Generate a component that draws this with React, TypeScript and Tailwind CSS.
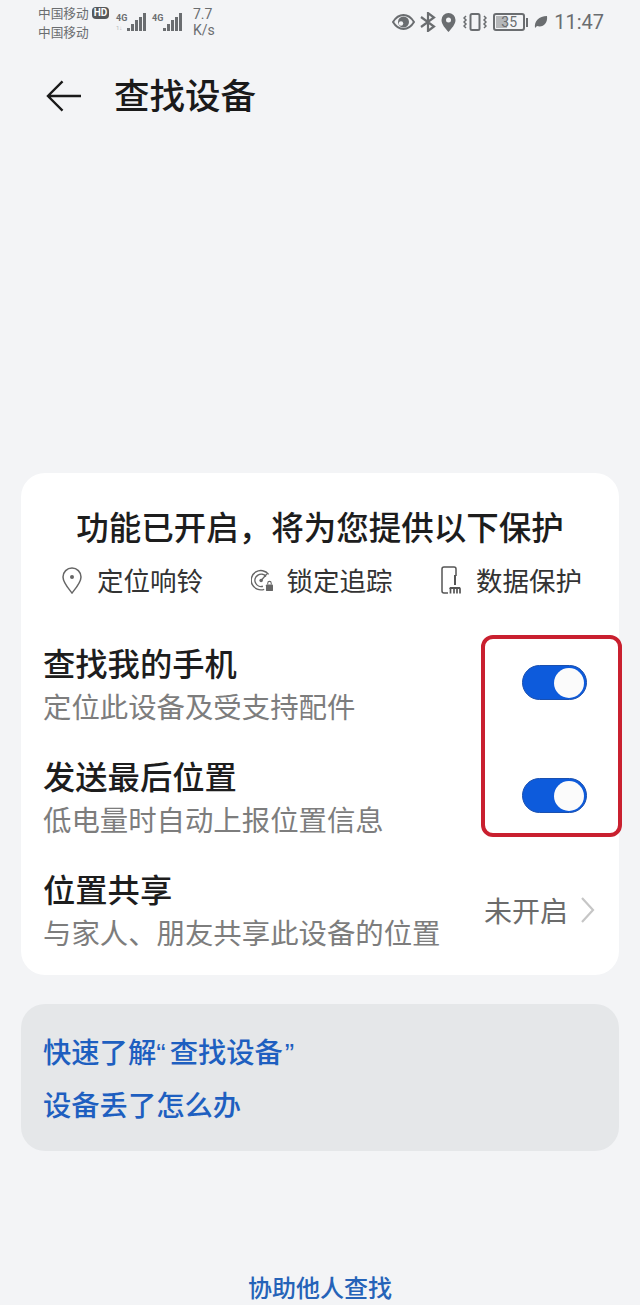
import React from 'react';

const cjk = { fontFamily: '"Noto Sans CJK SC", sans-serif' };
const roboto = { fontFamily: 'Roboto, sans-serif' };
const latin = { fontFamily: '"Liberation Sans", sans-serif' };

const Signal = () => (
  <div className="flex items-end gap-[1px] h-[18px]">
    {[3, 7, 11, 14, 18].map((h, i) => (
      <div key={i} className="w-[3px] bg-[#6a6d70]" style={{ height: h }} />
    ))}
  </div>
);

const Toggle = () => (
  <div className="flex items-center justify-end w-[65px] h-[35px] mt-[25px] rounded-full bg-[#0d5bdc] border border-[#1a50b0] pr-[2px]">
    <div className="w-[30px] h-[30px] rounded-full bg-[#fbfbfb]" />
  </div>
);

const Row = ({ title, sub, right }: { title: string; sub: string; right: React.ReactNode }) => (
  <div className="flex justify-between h-[88px] pl-[22px] pr-[32px] whitespace-nowrap">
    <div>
      <div className="text-[32.3px] leading-[44px] font-medium text-[#1d1d1d]">{title}</div>
      <div className="text-[28.4px] leading-[44px] text-[#7d7d7d]">{sub}</div>
    </div>
    {right}
  </div>
);

const Feature = ({ icon, label }: { icon: React.ReactNode; label: string }) => (
  <div className="flex items-center gap-[14px]">
    <div className="flex justify-center w-[22px]">{icon}</div>
    <span className="text-[26.5px] leading-[36px] text-[#333]">{label}</span>
  </div>
);

export default function App() {
  return (
    <div className="w-[640px] h-[1305px] overflow-hidden bg-[#f3f4f6] flex flex-col" style={cjk}>
      {/* status bar */}
      <div className="flex items-start justify-between pl-[38px] pr-[36px] pt-[3px] h-[46px] text-[#6a6d70]">
        <div className="flex items-start">
          <div className="w-[76px] text-[12.7px] leading-[19px]">
            <div className="flex items-center gap-[3px] whitespace-nowrap">
              中国移动
              <span className="bg-[#55585b] text-white rounded-[4px] text-[10px] leading-[12px] px-[2px] font-bold" style={roboto}>HD</span>
            </div>
            <div>中国移动</div>
          </div>
          <div className="flex items-end gap-[1px] ml-[2px] mt-[10px]">
            <div className="w-[10px] h-[18px] flex flex-col justify-between">
              <span className="text-[9px] leading-[10px] font-bold" style={roboto}>4G</span>
              <span className="text-[6px] leading-[6px] text-[#b5b7b9]" style={roboto}>1↓</span>
            </div>
            <Signal />
          </div>
          <div className="flex items-end gap-[1px] ml-[6px] mt-[10px]">
            <div className="w-[10px] h-[18px]">
              <span className="block text-[9px] leading-[10px] font-bold" style={roboto}>4G</span>
            </div>
            <Signal />
          </div>
          <div className="ml-[11px] mt-[3px] text-[14px] leading-[16px]" style={roboto}>
            <div>7.7</div>
            <div>K/s</div>
          </div>
        </div>
        <div className="flex items-center mt-[9px]">
          <svg width="23" height="16" viewBox="0 0 23 16">
            <path d="M1 8c2.800-4.600 6.500-7 10.500-7s7.700 2.400 10.500 7c-2.800 4.600-6.500 7-10.500 7S3.800 12.600 1 8z" fill="none" stroke="#6a6d70" strokeWidth="2" />
            <circle cx="11.500" cy="8" r="5.500" fill="#6a6d70" />
            <circle cx="9" cy="9.500" r="2.200" fill="#f3f4f6" />
          </svg>
          <svg width="16" height="20" viewBox="0 0 16 20" fill="none" stroke="#6a6d70" strokeWidth="2.200" className="ml-[5px]">
            <path d="M1 5l13 9.500L8 19V1l6 4.500L1 15" />
          </svg>
          <svg width="15" height="19" viewBox="0 0 14 19" className="ml-[5px]">
            <path d="M7 0a7 7 0 0 1 7 7c0 4.500-4 8.500-7 12-3-3.500-7-7.500-7-12a7 7 0 0 1 7-7z" fill="#6a6d70" />
            <circle cx="7" cy="7" r="2.500" fill="#f3f4f6" />
          </svg>
          <svg width="24" height="18" viewBox="0 0 24 18" fill="none" stroke="#6a6d70" strokeWidth="1.500" className="ml-[7px]">
            <rect x="7.500" y="1" width="9" height="16" rx="1.500" strokeWidth="2" />
            <path d="M3 3L1 5l2 2-2 2 2 2-2 2 2 2M21 3l2 2-2 2 2 2-2 2 2 2-2 2" />
          </svg>
          <div className="relative flex items-center justify-center ml-[6px] w-[32px] h-[18px] rounded-[3px] border-[2px] border-[#6a6d70] text-[14px] leading-none" style={roboto}>
            <div className="absolute left-[1px] top-[1px] bottom-[1px] w-[11px] bg-[#b5b7b9]" />
            <span className="relative">35</span>
          </div>
          <div className="w-[2px] h-[9px] ml-[1px] bg-[#6a6d70]" />
          <svg width="14" height="14" viewBox="0 0 14 14" className="ml-[6px]">
            <path d="M1 13C0 6 5 1 13 1c1 7-4 12-10 10z" fill="#6a6d70" />
          </svg>
          <span className="ml-[6px] text-[20px] leading-none" style={roboto}>11:47</span>
        </div>
      </div>

      {/* title bar */}
      <div className="flex items-center pl-[46px] h-[100px]">
        <svg width="35" height="34" viewBox="0 0 36 34" fill="none" stroke="#1a1a1a" strokeWidth="2.400">
          <path d="M36 17H2M17 2L2 17l15 15" />
        </svg>
        <h1 className="ml-[33px] -mt-[4px] text-[35.500px] font-medium text-[#1a1a1a]">查找设备</h1>
      </div>

      {/* main card */}
      <div className="relative mt-[327px] mx-[21px] h-[502px] rounded-[24px] bg-white">
        <div className="pt-[31px] text-center text-[32.5px] leading-[44px] font-medium text-[#1d1d1d] whitespace-nowrap">
          功能已开启，将为您提供以下保护
        </div>
        <div className="flex gap-[47.500px] pl-[40px] mt-[14px] whitespace-nowrap">
          <Feature
            label="定位响铃"
            icon={
              <svg width="20" height="27" viewBox="0 0 20 27" fill="none" stroke="#666" strokeWidth="1.500">
                <path d="M10 1a9 9 0 0 1 9 9c0 5.500-5 11-9 16-4-5-9-10.500-9-16a9 9 0 0 1 9-9z" />
                <circle cx="10" cy="10" r="2" fill="#666" stroke="none" />
              </svg>
            }
          />
          <Feature
            label="锁定追踪"
            icon={
              <svg width="25" height="25" viewBox="0 0 25 25" fill="none" stroke="#666" strokeWidth="1.600">
                <path d="M20 5.500A11 11 0 1 0 15 22.500" />
                <path d="M17 8a7 7 0 1 0-3.500 11" />
                <path d="M11.500 12.500L18 5" />
                <circle cx="11.500" cy="12.500" r="2" fill="#666" stroke="none" />
                <rect x="17" y="17" width="8" height="7.500" rx="1" fill="#666" stroke="none" />
                <path d="M19 17v-1.500a2 2 0 0 1 4 0V17" strokeWidth="1.200" />
              </svg>
            }
          />
          <Feature
            label="数据保护"
            icon={
              <svg width="21" height="28" viewBox="0 0 21 28" fill="none" stroke="#555" strokeWidth="1.500">
                <path d="M7 27H3a2 2 0 0 1-2-2V3a2 2 0 0 1 2-2h10a2 2 0 0 1 2 2v7" />
                <path d="M14 9v10" strokeWidth="2" />
                <path d="M9 21h10l1 2H8z" fill="#555" stroke="none" />
                <path d="M9.500 23v4.500M13 23v4.500M16 23v4.500M19 23v4.500" strokeWidth="1.700" />
              </svg>
            }
          />
        </div>

        <div className="flex flex-col gap-[25px] mt-[42px]">
          <Row title="查找我的手机" sub="定位此设备及受支持配件" right={<Toggle />} />
          <Row title="发送最后位置" sub="低电量时自动上报位置信息" right={<Toggle />} />
          <Row
            title="位置共享"
            sub="与家人、朋友共享此设备的位置"
            right={
              <div className="flex items-center -mr-[8px]">
                <span className="text-[28px] text-[#6b6b6b]">未开启</span>
                <svg width="15" height="28" viewBox="0 0 15 28" fill="none" stroke="#c6c6c6" strokeWidth="2.200" className="ml-[12px]">
                  <path d="M2 2l11 12L2 26" />
                </svg>
              </div>
            }
          />
        </div>

        {/* red annotation around the switches */}
        <div className="absolute left-[460px] top-[162px] w-[141px] h-[202px] rounded-[12px] border-[4px] border-[#c9202f]" />
      </div>

      {/* help links */}
      <div className="mt-[29px] mx-[21px] h-[147px] rounded-[24px] bg-[#e5e7e9] pt-[20px] pl-[22px] text-[28.3px] leading-[53px] font-medium text-[#1e5fc0] whitespace-nowrap">
        <div className="h-[53px]">
          快速了解<span className="mr-[4px]" style={latin}>“</span>查找设备<span className="ml-[2px]" style={latin}>”</span>
        </div>
        <div>设备丢了怎么办</div>
      </div>

      <div className="mt-auto pb-[2px] text-center text-[24px] leading-[32px] font-medium text-[#2563b8]">协助他人查找</div>
    </div>
  );
}
